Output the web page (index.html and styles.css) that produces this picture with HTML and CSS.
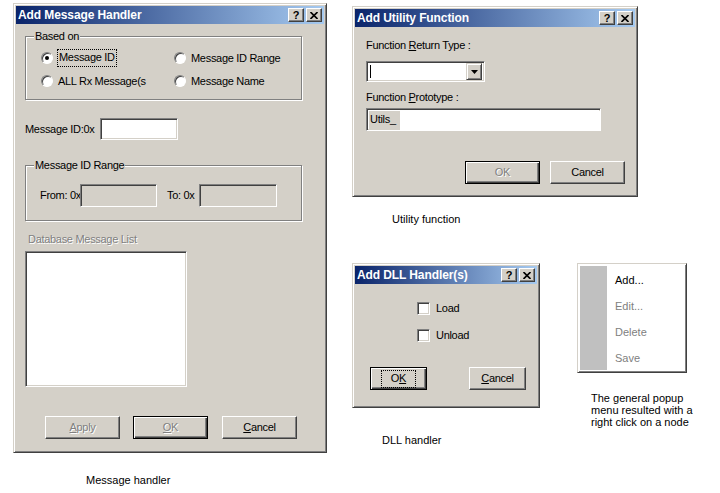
FILE: index.html
```html
<!DOCTYPE html>
<html>
<head>
<meta charset="utf-8">
<link rel="stylesheet" href="styles.css">
</head>
<body>
<div class="win win-msg">
  <div class="title"><span class="title-text">Add Message Handler</span><span class="tbtn help">?</span><span class="tbtn close"><svg width="8" height="7" viewBox="0 0 8 7"><path d="M0.5 0 L7.5 7 M7.5 0 L0.5 7" stroke="#000" stroke-width="1.6"/></svg></span></div>
  <div class="client">
    <div class="group g-based">
      <span class="glabel">Based on</span>
      <div class="radios">
        <label class="opt"><span class="radio on"></span><span class="focus">Message ID</span></label>
        <label class="opt"><span class="radio"></span><span class="otext">Message ID Range</span></label>
        <label class="opt"><span class="radio"></span><span class="otext">ALL Rx Message(s</span></label>
        <label class="opt"><span class="radio"></span><span class="otext">Message Name</span></label>
      </div>
    </div>
    <div class="idrow"><span class="idlabel">Message ID:0x</span><span class="edit id-edit"></span></div>
    <div class="group g-range">
      <span class="glabel">Message ID Range</span>
      <div class="rangerow">
        <span class="from-l">From: 0x</span><span class="edit dis r-edit"></span>
        <span class="to-l">To: 0x</span><span class="edit dis r-edit2"></span>
      </div>
    </div>
    <div class="dblabel">Database Message List</div>
    <div class="edit listbox"></div>
    <div class="btnrow msg-btns">
      <span class="btn disabled"><u>A</u>pply</span>
      <span class="btn default disabled"><span><u>O</u>K</span></span>
      <span class="btn cancel1"><u>C</u>ancel</span>
    </div>
  </div>
</div>

<div class="win win-util">
  <div class="title"><span class="title-text">Add Utility Function</span><span class="tbtn help">?</span><span class="tbtn close"><svg width="8" height="7" viewBox="0 0 8 7"><path d="M0.5 0 L7.5 7 M7.5 0 L0.5 7" stroke="#000" stroke-width="1.6"/></svg></span></div>
  <div class="client">
    <div class="ulabel first">Function <u>R</u>eturn Type :</div>
    <div class="edit combo"><span class="caret"></span><span class="dropbtn"><svg width="7" height="4" viewBox="0 0 7 4"><path d="M0 0 H7 L3.5 4 Z" fill="#000"/></svg></span></div>
    <div class="ulabel second">Function <u>P</u>rototype :</div>
    <div class="edit proto"><span class="prefix">Utils_</span><span class="protoval"></span></div>
    <div class="btnrow util-btns">
      <span class="btn default disabled"><span>OK</span></span>
      <span class="btn">Cancel</span>
    </div>
  </div>
</div>

<div class="win win-dll">
  <div class="title"><span class="title-text">Add DLL Handler(s)</span><span class="tbtn help">?</span><span class="tbtn close"><svg width="8" height="7" viewBox="0 0 8 7"><path d="M0.5 0 L7.5 7 M7.5 0 L0.5 7" stroke="#000" stroke-width="1.6"/></svg></span></div>
  <div class="client">
    <label class="chkrow c1"><span class="chk"></span><span>Load</span></label>
    <label class="chkrow c2"><span class="chk"></span><span>Unload</span></label>
    <div class="btnrow dll-btns">
      <span class="btn small default"><span class="focus">O<u>K</u></span></span>
      <span class="btn small"><u>C</u>ancel</span>
    </div>
  </div>
</div>

<div class="menu">
  <div class="strip"></div>
  <ul class="items">
    <li>Add...</li>
    <li class="gray">Edit...</li>
    <li class="gray">Delete</li>
    <li class="gray">Save</li>
  </ul>
</div>

<div class="caption cap-msg">Message handler</div>
<div class="caption cap-util">Utility function</div>
<div class="caption cap-dll">DLL handler</div>
<div class="caption cap-menu">The general popup<br>menu resulted with a<br>right click on a node</div>
</body>
</html>
```

FILE: styles.css
```css
* { box-sizing: border-box; }
html, body { margin: 0; padding: 0; }
body {
  width: 720px;
  height: 493px;
  background: #fff;
  position: relative;
  overflow: hidden;
  font-family: "Liberation Sans", Arial, sans-serif;
  font-size: 11px;
  line-height: 13px;
  color: #000;
  letter-spacing: -0.3px;
  white-space: nowrap;
}

/* window frame */
.win {
  position: absolute;
  background: #d4d0c8;
  border: 1px solid;
  border-color: #d4d0c8 #404040 #404040 #d4d0c8;
  box-shadow: inset 1px 1px #fff, inset -1px -1px #808080;
  padding: 2px;
  display: flex;
  flex-direction: column;
}
.win-msg { left: 13px; top: 3px; width: 314px; height: 450px; }
.win-util { left: 352px; top: 6px; width: 286px; height: 191px; }
.win-dll { left: 352px; top: 263px; width: 188px; height: 145px; }

.title {
  height: 18px;
  flex: none;
  background: linear-gradient(to right, #0a246a, #a6caf0);
  display: flex;
  align-items: center;
  padding: 0 2px 0 2px;
  color: #fff;
  font-weight: bold;
  font-size: 12px;
  letter-spacing: -0.1px;
}
.title-text { flex: 1; line-height: 18px; }
.tbtn {
  width: 16px;
  height: 14px;
  flex: none;
  background: #d4d0c8;
  border: 1px solid;
  border-color: #fff #404040 #404040 #fff;
  box-shadow: inset -1px -1px #808080;
  display: flex;
  align-items: center;
  justify-content: center;
  color: #000;
  font-size: 11px;
  font-weight: bold;
  line-height: 12px;
}
.tbtn.close { margin-left: 2px; }
.tbtn svg { display: block; }

.client { flex: 1; display: flex; flex-direction: column; align-items: flex-start; }

/* sunken edit */
.edit {
  flex: none;
  background: #fff;
  border: 1px solid;
  border-color: #808080 #fff #fff #808080;
  box-shadow: inset 1px 1px #404040, inset -1px -1px #d4d0c8;
}
.edit.dis { background: #d4d0c8; }

/* group boxes */
.group {
  position: relative;
  border: 1px solid #808080;
  box-shadow: inset 1px 1px #fff, 1px 1px #fff;
  margin-left: 9px;
  width: 277px;
}
.glabel {
  position: absolute;
  top: -7px;
  left: 8px;
  background: #d4d0c8;
  padding: 0 1px;
  line-height: 13px;
}
.g-based { margin-top: 12px; height: 64px; }
.radios {
  display: grid;
  grid-template-columns: 133px auto;
  row-gap: 3px;
  padding: 11px 0 0 15px;
}
.opt { display: flex; align-items: center; height: 20px; }
.radio {
  width: 12px;
  height: 12px;
  border-radius: 50%;
  background: #fff;
  border: 1px solid;
  border-color: #808080 #fff #fff #808080;
  box-shadow: inset 1px 1px #404040;
  display: flex;
  align-items: center;
  justify-content: center;
  margin-right: 4px;
  flex: none;
}
.radio.on::after {
  content: "";
  width: 4px;
  height: 4px;
  border-radius: 50%;
  background: #000;
}
.otext { padding: 0 1px; }
.focus { border: 1px dotted #000; padding: 1px 1px 2px; line-height: 13px; }

.idrow { display: flex; align-items: center; margin: 18px 0 0 9px; }
.idlabel { width: 75px; flex: none; }
.id-edit { width: 78px; height: 22px; }

.g-range { margin-top: 25px; height: 56px; }
.rangerow { display: flex; align-items: center; padding: 18px 0 0 14px; }
.from-l { width: 40px; flex: none; }
.r-edit { width: 77px; height: 23px; }
.to-l { width: 32px; margin-left: 10px; flex: none; }
.r-edit2 { width: 78px; height: 23px; }

.dblabel {
  margin: 12px 0 0 12px;
  color: #808080;
  text-shadow: 1px 1px #fff;
}
.listbox { margin: 5px 0 0 9px; width: 162px; height: 136px; }

/* buttons */
.btnrow { display: flex; }
.btn {
  width: 75px;
  height: 23px;
  flex: none;
  background: #d4d0c8;
  border: 1px solid;
  border-color: #fff #404040 #404040 #fff;
  box-shadow: inset -1px -1px #808080;
  display: flex;
  align-items: center;
  justify-content: center;
}
.btn.default {
  border: 1px solid #000;
  box-shadow: inset 1px 1px #fff, inset -1px -1px #404040, inset -2px -2px #808080;
}
.btn.disabled { color: #808080; text-shadow: 1px 1px #fff; }
.msg-btns { margin: 29px 0 0 29px; gap: 13px; }
.msg-btns .cancel1 { margin-left: 1px; }

/* utility dialog */
.ulabel.first { margin: 12px 0 0 11px; }
.combo {
  margin: 9px 0 0 11px;
  width: 119px;
  height: 21px;
  display: flex;
  align-items: center;
  padding: 2px;
}
.caret { width: 1px; height: 13px; background: #000; margin-left: 1px; }
.dropbtn {
  margin-left: auto;
  width: 16px;
  height: 17px;
  background: #d4d0c8;
  border: 1px solid;
  border-color: #d4d0c8 #404040 #404040 #d4d0c8;
  box-shadow: inset 1px 1px #fff, inset -1px -1px #808080;
  display: flex;
  align-items: center;
  justify-content: center;
}
.dropbtn svg { display: block; }
.ulabel.second { margin: 9px 0 0 11px; }
.proto {
  margin: 4px 0 0 11px;
  width: 235px;
  height: 23px;
  display: flex;
  padding: 2px 0 0 2px;
}
.prefix {
  width: 30px;
  background: #d4d0c8;
  padding: 2px 0 0 1px;
}
.protoval { flex: 1; background: #fff; border-left: 1px solid #d4d0c8; }
.util-btns { margin-top: 30px; align-self: stretch; justify-content: flex-end; gap: 10px; padding-right: 10px; }

/* dll dialog */
.chkrow { display: flex; align-items: center; padding-left: 62px; height: 13px; }
.c1 { margin-top: 18px; }
.c2 { margin-top: 14px; }
.chk {
  width: 13px;
  height: 13px;
  flex: none;
  background: #fff;
  border: 1px solid;
  border-color: #808080 #fff #fff #808080;
  box-shadow: inset 1px 1px #404040, inset -1px -1px #d4d0c8;
  margin-right: 6px;
}
.dll-btns { margin: 25px 0 0 15px; gap: 42px; }
.btn.small { width: 57px; }
.btn.small .focus { padding: 1px 9px 2px; }

/* popup menu */
.menu {
  position: absolute;
  left: 577px;
  top: 263px;
  width: 110px;
  height: 110px;
  background: #fff;
  border: 1px solid;
  border-color: #d4d0c8 #404040 #404040 #d4d0c8;
  box-shadow: inset 1px 1px #fff, inset -1px -1px #808080;
  padding: 2px;
  display: flex;
}
.strip { width: 27px; background: #c0c0c0; flex: none; }
.items { list-style: none; margin: 0; padding: 1px 0 0 8px; flex: 1; }
.items li { height: 26px; line-height: 26px; letter-spacing: 0; }
.items li.gray { color: #808080; }

/* captions */
.caption {
  position: absolute;
  letter-spacing: 0;
  line-height: 12px;
}
.cap-msg { left: 86px; top: 474px; }
.cap-util { left: 392px; top: 213px; }
.cap-dll { left: 382px; top: 434px; }
.cap-menu { left: 591px; top: 392px; }
```
